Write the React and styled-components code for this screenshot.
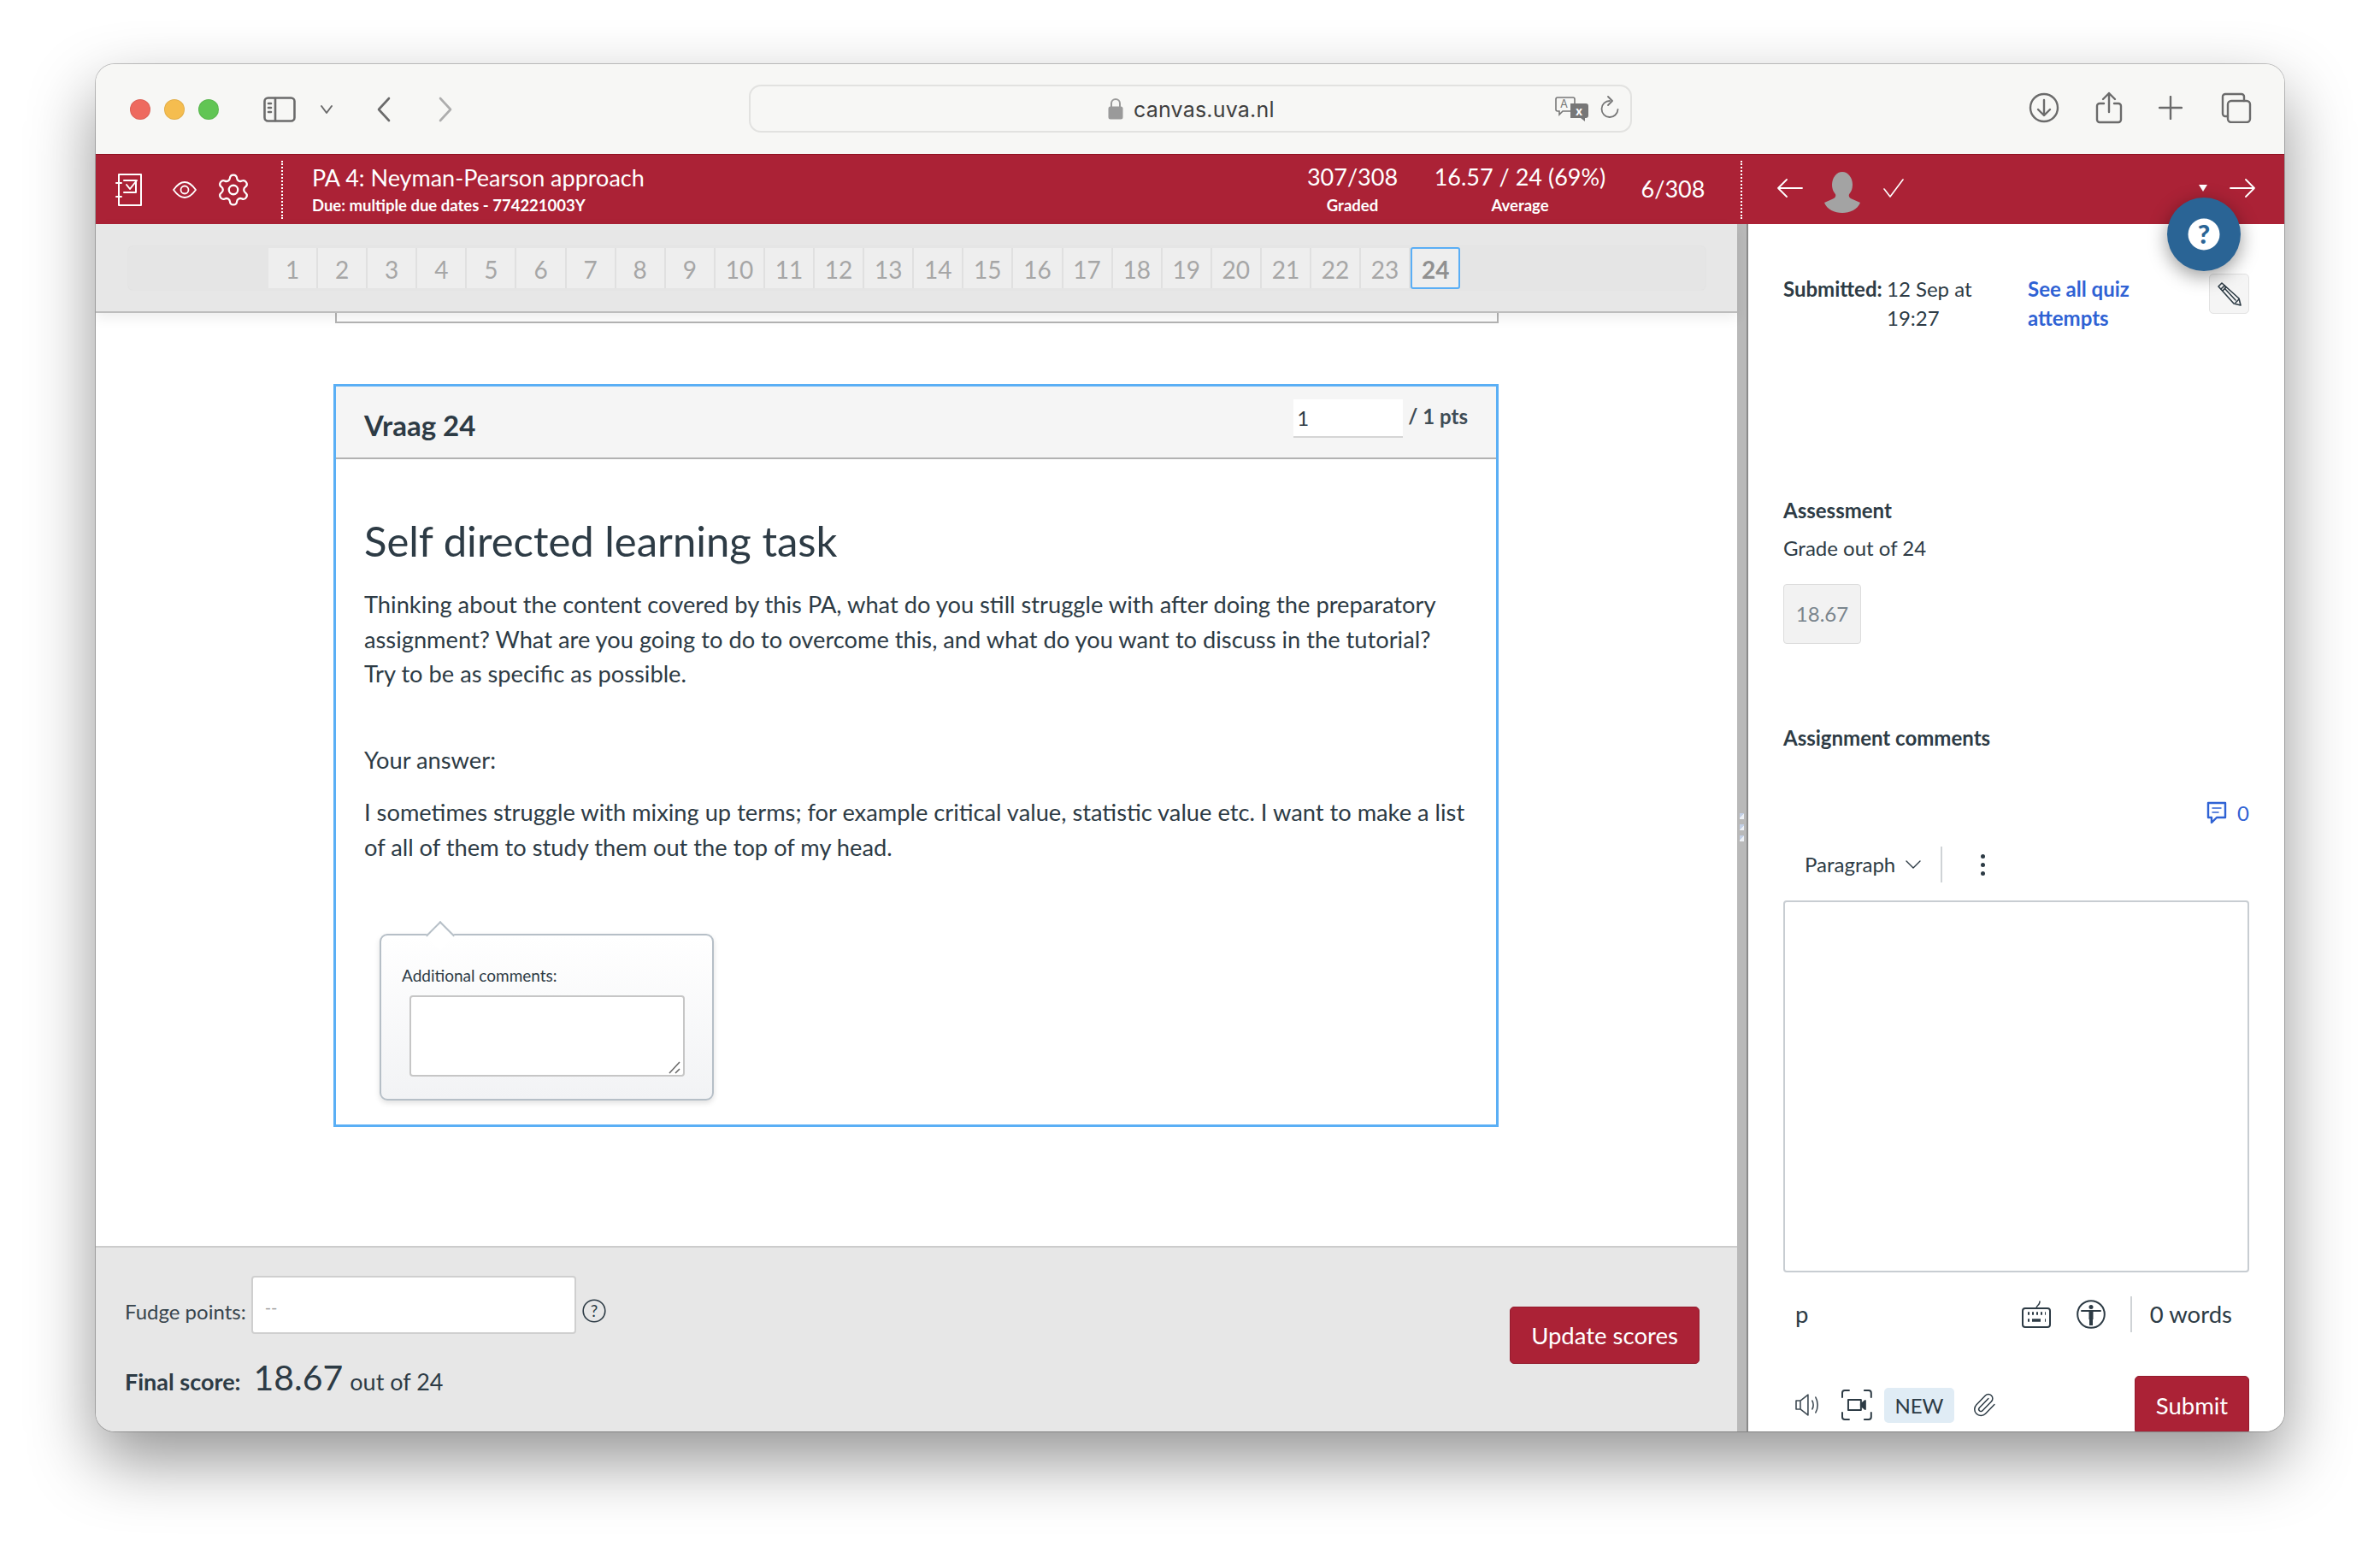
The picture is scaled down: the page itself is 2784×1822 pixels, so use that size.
import { createGlobalStyle, styled } from 'styled-components';
import { Settings, Paperclip } from 'lucide-react';

const GlobalStyle = createGlobalStyle`
    html, body {
        margin: 0;
        padding: 0;
        background: #fff;
    }
    * {
        box-sizing: border-box;
    }
    body {
        font-family: Lato, "Open Sans", sans-serif;
        color: #2d3b45;
    }
`;

const Page = styled.div`
    width: 2784px;
    height: 1822px;
    padding: 75px 112px 0;
    overflow: hidden;
`;

const Window = styled.div`
    width: 2560px;
    height: 1599px;
    border-radius: 22px;
    overflow: hidden;
    display: flex;
    flex-direction: column;
    box-shadow: 0 0 0 1px rgba(0, 0, 0, 0.22), 0 34px 78px rgba(0, 0, 0, 0.42);
`;

/* safari toolbar */
const Toolbar = styled.div`
    height: 105px;
    flex: none;
    background: #f7f7f5;
    display: grid;
    grid-template-columns: 764px 1033px 1fr;
    align-items: center;
`;

const ToolLeft = styled.div`
    display: flex;
    align-items: center;
    padding-left: 40px;
    & svg {
        flex: none;
    }
`;

const Light = styled.span`
    width: 24px;
    height: 24px;
    border-radius: 50%;
    margin-right: 16px;
    background: ${(p) => p.$color};
    box-shadow: inset 0 0 0 1px rgba(0, 0, 0, 0.08);
`;

const AddressBar = styled.div`
    height: 56px;
    margin-top: -2px;
    border: 2px solid #e2e2e0;
    border-radius: 14px;
    background: #f7f7f5;
    display: flex;
    align-items: center;
    padding: 0 12px 0 418px;
`;

const Url = styled.span`
    font-family: Inter, sans-serif;
    font-size: 25px;
    color: #3f3f3f;
    margin-left: 12px;
    margin-right: auto;
    margin-top: 2px;
    letter-spacing: 0.2px;
`;

const ToolRight = styled.div`
    display: flex;
    align-items: center;
    justify-content: flex-end;
    gap: 42px;
    padding-right: 38px;
    margin-top: -4px;
`;

/* speedgrader red bar */
const GraderBar = styled.header`
    height: 82px;
    flex: none;
    background: #ab2236;
    border-top: 1px solid #8f1020;
    display: flex;
    align-items: center;
    color: #fff;
    position: relative;
`;

const BarIcons = styled.div`
    width: 217px;
    flex: none;
    display: flex;
    align-items: center;
    padding-left: 23px;
`;

const DottedLine = styled.span`
    width: 0;
    height: 68px;
    flex: none;
    border-left: 2px dotted #fff;
`;

const Assignment = styled.div`
    flex: 1;
    padding-left: 34px;
`;

const AssignmentTitle = styled.div`
    font-size: 27px;
    line-height: 36px;
    margin-bottom: 1px;
`;

const SmallLabel = styled.div`
    font-size: 18.5px;
    line-height: 26px;
    font-weight: 700;
`;

const Stat = styled.div`
    width: ${(p) => p.$w}px;
    flex: none;
    text-align: center;
    font-size: 27px;
    line-height: 36px;
    padding-bottom: 2px;
    margin-right: ${(p) => p.$mr || 0}px;
    & ${SmallLabel} {
        margin-top: 2px;
    }
`;

const StudentNav = styled.div`
    width: 634px;
    flex: none;
    height: 100%;
    display: flex;
    align-items: center;
    padding: 0 34px 3px 41px;
`;

const Avatar = styled.div`
    margin: 9px 0 0 24px;
    width: 44px;
    height: 48px;
    display: flex;
`;

const Caret = styled.span`
    width: 0;
    height: 0;
    margin-left: auto;
    margin-right: 26px;
    border-left: 5px solid transparent;
    border-right: 5px solid transparent;
    border-top: 8px solid #fff;
`;

const HelpBubble = styled.div`
    position: absolute;
    left: 2423px;
    top: 50px;
    width: 86px;
    height: 86px;
    border-radius: 50%;
    background: #2a6495;
    box-shadow: 0 6px 22px rgba(0, 0, 0, 0.4);
    display: flex;
    align-items: center;
    justify-content: center;
    z-index: 5;
`;

const Body = styled.div`
    flex: 1;
    min-height: 0;
    display: flex;
`;

const LeftPane = styled.div`
    width: 1920px;
    flex: none;
    display: flex;
    flex-direction: column;
`;

const Gutter = styled.div`
    width: 13px;
    flex: none;
    background: #b9b9b9;
    border-right: 2px solid #8a8a8a;
    display: flex;
    flex-direction: column;
    align-items: center;
    gap: 6px;
    padding-top: 689px;
    padding-right: 1px;
`;

const GripDot = styled.span`
    width: 5px;
    height: 7px;
    background: linear-gradient(135deg, #c3d0e6 50%, #eef1f6 50%);
`;

const RightPane = styled.aside`
    flex: 1;
    min-width: 0;
    background: #fff;
    overflow: hidden;
    padding: 59px 41px 0 41px;
    font-size: 24px;
    line-height: 34px;
`;

const TabsBar = styled.div`
    height: 104px;
    flex: none;
    background: #e7e7e7;
    border-bottom: 2px solid #bdbdbd;
    padding: 26px 37px 0 38px;
    box-shadow: 0 6px 14px rgba(0, 0, 0, 0.07);
    position: relative;
    z-index: 1;
`;

const TabsStrip = styled.div`
    height: 51px;
    background: #e5e5e5;
    border-radius: 5px;
    box-shadow: 0 0 2px rgba(0, 0, 0, 0.06);
    padding: 2px 0 0 164px;
    display: flex;
`;

const QTab = styled.div`
    width: 58.1px;
    height: 47px;
    flex: none;
    display: flex;
    align-items: center;
    justify-content: center;
    font-size: 28px;
    padding-top: 3px;
    background: #eeeeee;
    color: ${(p) => (p.$active ? '#909090' : '#a6a6a6')};
    font-weight: ${(p) => (p.$active ? 700 : 400)};
    border-right: 2px solid #e0e0e0;
    ${(p) => p.$active && `
        border: 2px solid #5aaef5;
        border-radius: 3px;
        margin-top: -1px;
        height: 49px;
    `}
`;

const Content = styled.main`
    flex: 1;
    min-height: 0;
    background: #fff;
    padding: 0 279px 0 278px;
`;

const PrevStub = styled.div`
    height: 12px;
    margin-left: 2px;
    border: 2px solid #b4b4b4;
    border-top: 0;
`;

const QuestionBox = styled.section`
    margin-top: 71px;
    height: 869px;
    border: 3px solid #5aaff5;
`;

const QuestionHead = styled.div`
    height: 85px;
    background: #f5f5f5;
    border-bottom: 2px solid #b2b2b2;
    display: flex;
    padding: 0 33px;
`;

const QuestionName = styled.h2`
    margin: 23px auto 0 0;
    font-size: 33px;
    line-height: 44px;
    font-weight: 700;
`;

const PointsInput = styled.div`
    width: 128px;
    height: 45px;
    margin-top: 15px;
    background: #fff;
    border-bottom: 2px solid #d5d5d5;
    font-size: 24px;
    line-height: 44px;
    padding-left: 4px;
    margin-right: 6px;
`;

const PointsLabel = styled.div`
    margin-top: 18px;
    font-size: 24px;
    line-height: 34px;
    font-weight: 700;
    color: #3f4c55;
`;

const QuestionBody = styled.div`
    padding: 65px 33px 0;
`;

const QuestionTitle = styled.h1`
    margin: 0 0 25px;
    font-size: 49px;
    line-height: 60px;
    font-weight: 400;
`;

const Para = styled.p`
    margin: 0 0 ${(p) => p.$mb || 0}px;
    font-size: 27.28px;
    line-height: 40.7px;
`;

const Popup = styled.div`
    position: relative;
    width: 391px;
    height: 195px;
    margin: 81px 0 0 18px;
    border: 2px solid #b6bfc7;
    border-radius: 9px;
    background: linear-gradient(#ffffff, #f2f3f5);
    box-shadow: 0 3px 6px rgba(0, 0, 0, 0.12);
    padding: 34px 0 0 24px;
    &::before {
        content: '';
        position: absolute;
        left: 57px;
        top: -12px;
        width: 22px;
        height: 22px;
        background: #fff;
        border-top: 2px solid #b6bfc7;
        border-left: 2px solid #b6bfc7;
        transform: rotate(45deg);
    }
`;

const PopupLabel = styled.div`
    font-size: 19px;
    line-height: 26px;
`;

const PopupArea = styled.div`
    position: relative;
    width: 322px;
    height: 95px;
    margin: 10px 0 0 9px;
    background: #fff;
    border: 2px solid #c6c6c6;
    border-radius: 4px;
    & svg {
        position: absolute;
        right: 2px;
        bottom: 1px;
    }
`;

const Footer = styled.footer`
    height: 217px;
    flex: none;
    background: #e7e7e7;
    border-top: 2px solid #cccccc;
    display: flex;
    justify-content: space-between;
    padding: 33px 44px 0 34px;
`;

const FudgeRow = styled.div`
    display: flex;
    height: 68px;
    align-items: center;
`;

const FudgeLabel = styled.span`
    font-size: 24px;
    margin-top: 15px;
    margin-right: 6px;
    color: #37444d;
`;

const FudgeInput = styled.div`
    width: 380px;
    height: 68px;
    background: #fff;
    border: 2px solid #cfcfcf;
    border-radius: 4px;
    color: #a0a0a0;
    font-size: 20px;
    line-height: 34px;
    padding: 17px 0 0 14px;
    margin-right: 7px;
`;

const FudgeHelp = styled.span`
    margin-top: 13px;
    display: flex;
`;

const FinalRow = styled.div`
    display: flex;
    align-items: baseline;
    margin-top: 24px;
    font-size: 27px;
`;

const FinalLabel = styled.strong`
    font-size: 27px;
    margin-right: 15px;
`;

const FinalValue = styled.span`
    font-size: 41px;
    line-height: 54px;
    margin-right: 8px;
`;

const RedButton = styled.button`
    font-family: inherit;
    background: #ab2236;
    color: #fff;
    border: 1px solid #931b2d;
    border-radius: 5px;
    font-size: 27.5px;
    width: ${(p) => p.$w}px;
    height: ${(p) => p.$h}px;
    margin-top: ${(p) => p.$mt || 0}px;
    margin-left: ${(p) => p.$ml || 0}px;
    flex: none;
    padding: 0;
`;

const SubmissionRow = styled.div`
    display: flex;
    align-items: flex-start;
    min-height: 68px;
`;

const SubmittedLabel = styled.strong`
    width: 121px;
    flex: none;
    font-weight: 700;
`;

const SubmittedDate = styled.span`
    width: 165px;
    flex: none;
`;

const QuizLink = styled.a`
    width: 212px;
    flex: none;
    color: #2f62d4;
    font-weight: 700;
`;

const PencilButton = styled.div`
    width: 47px;
    height: 47px;
    flex: none;
    margin-top: -1px;
    background: #f5f5f5;
    border: 1px solid #e2e2e2;
    border-radius: 5px;
    display: flex;
    align-items: center;
    justify-content: center;
`;

const SectionTitle = styled.div`
    font-weight: 700;
    margin-top: ${(p) => p.$mt}px;
`;

const PlainLine = styled.div`
    margin-top: ${(p) => p.$mt}px;
`;

const GradeField = styled.div`
    width: 91px;
    height: 70px;
    margin-top: 25px;
    border: 1px solid #dcdcdc;
    border-radius: 4px;
    background: #f2f2f2;
    color: #7a858d;
    line-height: 68px;
    text-align: center;
`;

const CommentCount = styled.div`
    margin-top: 54px;
    display: flex;
    justify-content: flex-end;
    align-items: center;
    gap: 12px;
    color: #2f62d4;
`;

const EditorTools = styled.div`
    height: 42px;
    margin-top: 22px;
    display: flex;
    align-items: center;
    padding-left: 25px;
`;

const ParagraphLabel = styled.span`
    margin-right: 12px;
`;

const ToolDivider = styled.span`
    width: 2px;
    height: 42px;
    background: #cfd3d6;
    margin: 0 ${(p) => p.$mr}px 0 ${(p) => p.$ml}px;
    flex: none;
`;

const DotsIcon = styled.div`
    display: flex;
    flex-direction: column;
    gap: 5px;
    & span {
        width: 5px;
        height: 5px;
        border-radius: 50%;
        background: #2d3b45;
    }
`;

const EditorBox = styled.div`
    height: 435px;
    margin-top: 21px;
    border: 2px solid #c8cdd2;
    border-radius: 4px;
`;

const StatusRow = styled.div`
    height: 44px;
    margin-top: 27px;
    display: flex;
    align-items: center;
    padding-left: 14px;
    font-size: 27.5px;
`;

const StatusIcons = styled.div`
    margin-left: auto;
    display: flex;
    align-items: center;
    gap: 30px;
`;

const ActionRow = styled.div`
    height: 68px;
    margin-top: 50px;
    display: flex;
    align-items: center;
    padding-left: 14px;
`;

const NewBadge = styled.span`
    width: 83px;
    height: 41px;
    margin: 0 20px 0 14px;
    background: #e0ecf5;
    border-radius: 5px;
    font-size: 24px;
    line-height: 41px;
    text-align: center;
`;

const ChromeIcon = ({ w = 32, h = 32, sw = 2.6, color = '#6b6b6b', ml = 0, children }) => (
    <svg
        width={w}
        height={h}
        viewBox={`0 0 ${w} ${h}`}
        fill="none"
        stroke={color}
        strokeWidth={sw}
        strokeLinecap="round"
        strokeLinejoin="round"
        style={ml ? { marginLeft: ml } : undefined}
    >
        {children}
    </svg>
);

const HeaderArrow = ({ flip }) => (
    <ChromeIcon w={30} h={24} sw={1.8} color="#fff">
        {flip ? <path d="M1 12h28M19 2l10 10-10 10" /> : <path d="M29 12H1M11 2 1 12l10 10" />}
    </ChromeIcon>
);

const tabs = Array.from({ length: 24 }, (_, i) => i + 1);

export default function App() {
    return (
        <Page>
            <GlobalStyle />
            <Window>
                <Toolbar>
                    <ToolLeft>
                        <Light $color="#ee6a5f" />
                        <Light $color="#f5bd4f" />
                        <Light $color="#61c554" />
                        <ChromeIcon w={38} h={30} ml={36}>
                            <rect x="1.5" y="1.5" width="35" height="27" rx="4" />
                            <path d="M14 2v26M6 8h3M6 13h3M6 18h3" />
                        </ChromeIcon>
                        <ChromeIcon w={16} h={12} sw={2} ml={28}>
                            <path d="M2 2l6 8 6-8" />
                        </ChromeIcon>
                        <ChromeIcon w={18} h={30} ml={50}>
                            <path d="M15 2 3 15l12 13" />
                        </ChromeIcon>
                        <ChromeIcon w={18} h={30} ml={54} color="#adadad">
                            <path d="M3 2l12 13L3 28" />
                        </ChromeIcon>
                    </ToolLeft>
                    <AddressBar>
                        <svg width="18" height="26" viewBox="0 0 18 26">
                            <path d="M4 11V7a5 5 0 0 1 10 0v4" fill="none" stroke="#9a9a9a" strokeWidth="2" />
                            <rect x="0.5" y="10.5" width="17" height="15" rx="2.5" fill="#9a9a9a" />
                        </svg>
                        <Url>canvas.uva.nl</Url>
                        <svg width="40" height="30" viewBox="0 0 40 30">
                            <path d="M3 2h18a2 2 0 0 1 2 2v12a2 2 0 0 1-2 2H9l-4 4v-4H3a2 2 0 0 1-2-2V4a2 2 0 0 1 2-2z" fill="#f7f7f5" stroke="#777" strokeWidth="1.6" />
                            <path d="M18 9h18a3 3 0 0 1 3 3v11a3 3 0 0 1-3 3h-1v4l-5-4H18z" fill="#777" />
                            <text x="6" y="14" fontSize="13" fontFamily="Inter, sans-serif" fill="#777">A</text>
                            <text x="24" y="23" fontSize="14" fontWeight="700" fontFamily="Inter, sans-serif" fill="#fff">x</text>
                        </svg>
                        <ChromeIcon w={24} h={30} sw={1.8} ml={12} color="#777">
                            <path d="M12 6a9.5 9.5 0 1 0 9.5 10" />
                            <path d="M10 1l5 5-5 5" />
                        </ChromeIcon>
                    </AddressBar>
                    <ToolRight>
                        <ChromeIcon w={36} h={36} sw={2.4}>
                            <circle cx="18" cy="18" r="16" />
                            <path d="M18 9v17M11 20l7 7 7-7" />
                        </ChromeIcon>
                        <ChromeIcon w={32} h={38} sw={2.4}>
                            <path d="M10 14H5a3 3 0 0 0-3 3v16a3 3 0 0 0 3 3h22a3 3 0 0 0 3-3V17a3 3 0 0 0-3-3h-5" />
                            <path d="M16 24V2M9 9l7-7 7 7" />
                        </ChromeIcon>
                        <ChromeIcon w={28} h={28} sw={2.4}>
                            <path d="M14 1v26M1 14h26" />
                        </ChromeIcon>
                        <ChromeIcon w={36} h={36} sw={2.4} ml={3}>
                            <rect x="8" y="10" width="26" height="25" rx="4" />
                            <path d="M8 28H5a3 3 0 0 1-3-3V5a3 3 0 0 1 3-3h19a3 3 0 0 1 3 3v5" />
                        </ChromeIcon>
                    </ToolRight>
                </Toolbar>

                <GraderBar>
                    <BarIcons>
                        <ChromeIcon w={34} h={40} sw={2} color="#fff">
                            <path d="M4 2h26v36H4z" />
                            <path d="M1 12h6M1 28h6" />
                            <path d="M10 9h14v14H10" />
                            <path d="M13 14l4 5 8-10" />
                        </ChromeIcon>
                        <ChromeIcon w={28} h={22} sw={1.8} color="#fff" ml={33}>
                            <path d="M1 11C6 4 10 2 14 2s8 2 13 9c-5 7-9 9-13 9S6 18 1 11z" />
                            <circle cx="14" cy="11" r="4.5" />
                        </ChromeIcon>
                        <Settings size={42} color="#fff" strokeWidth={1.3} style={{ marginLeft: 22 }} />
                    </BarIcons>
                    <DottedLine />
                    <Assignment>
                        <AssignmentTitle>PA 4: Neyman-Pearson approach</AssignmentTitle>
                        <SmallLabel>Due: multiple due dates - 774221003Y</SmallLabel>
                    </Assignment>
                    <Stat $w={140} $mr={6}>
                        307/308
                        <SmallLabel>Graded</SmallLabel>
                    </Stat>
                    <Stat $w={240} $mr={9}>
                        16.57 / 24 (69%)
                        <SmallLabel>Average</SmallLabel>
                    </Stat>
                    <Stat $w={100} $mr={29}>6/308</Stat>
                    <DottedLine />
                    <StudentNav>
                        <HeaderArrow />
                        <Avatar>
                            <svg width="44" height="48" viewBox="0 0 44 48">
                                <ellipse cx="22" cy="15" rx="12" ry="15" fill="#a3a3a3" />
                                <path d="M14 26c1 3-1 5-4 6l-9 4c3 8 12 12 21 12s18-4 21-12l-9-4c-3-1-5-3-4-6z" fill="#a3a3a3" />
                            </svg>
                        </Avatar>
                        <ChromeIcon w={24} h={24} sw={1.6} color="#fff" ml={26}>
                            <path d="M1 13l7 9L23 2" />
                        </ChromeIcon>
                        <Caret />
                        <HeaderArrow flip />
                    </StudentNav>
                    <HelpBubble>
                        <svg width="38" height="38" viewBox="0 0 38 38">
                            <circle cx="19" cy="19" r="18.5" fill="#fff" />
                            <text x="19" y="30" textAnchor="middle" fontSize="31" fontWeight="900" fontFamily="Lato, sans-serif" fill="#2a6495">?</text>
                        </svg>
                    </HelpBubble>
                </GraderBar>

                <Body>
                    <LeftPane>
                        <TabsBar>
                            <TabsStrip>
                                {tabs.map((n) => (
                                    <QTab key={n} $active={n === 24}>{n}</QTab>
                                ))}
                            </TabsStrip>
                        </TabsBar>
                        <Content>
                            <PrevStub />
                            <QuestionBox>
                                <QuestionHead>
                                    <QuestionName>Vraag 24</QuestionName>
                                    <PointsInput>1</PointsInput>
                                    <PointsLabel>/ 1 pts</PointsLabel>
                                </QuestionHead>
                                <QuestionBody>
                                    <QuestionTitle>Self directed learning task</QuestionTitle>
                                    <Para $mb={60}>
                                        Thinking about the content covered by this PA, what do you still struggle with after doing the preparatory
                                        <br />
                                        assignment? What are you going to do to overcome this, and what do you want to discuss in the tutorial?
                                        <br />
                                        Try to be as specific as possible.
                                    </Para>
                                    <Para $mb={20}>Your answer:</Para>
                                    <Para>
                                        I sometimes struggle with mixing up terms; for example critical value, statistic value etc. I want to make a list
                                        <br />
                                        of all of them to study them out the top of my head.
                                    </Para>
                                    <Popup>
                                        <PopupLabel>Additional comments:</PopupLabel>
                                        <PopupArea>
                                            <svg width="16" height="16" viewBox="0 0 16 16" stroke="#6b6b6b" strokeWidth="1.6">
                                                <path d="M2 15 14 2M9 15l5-5" />
                                            </svg>
                                        </PopupArea>
                                    </Popup>
                                </QuestionBody>
                            </QuestionBox>
                        </Content>
                        <Footer>
                            <div>
                                <FudgeRow>
                                    <FudgeLabel>Fudge points:</FudgeLabel>
                                    <FudgeInput>--</FudgeInput>
                                    <FudgeHelp>
                                        <svg width="28" height="28" viewBox="0 0 28 28">
                                            <circle cx="14" cy="14" r="12.8" fill="none" stroke="#2d3b45" strokeWidth="1.6" />
                                            <text x="14" y="20.5" textAnchor="middle" fontSize="19" fontFamily="Lato, sans-serif" fill="#2d3b45">?</text>
                                        </svg>
                                    </FudgeHelp>
                                </FudgeRow>
                                <FinalRow>
                                    <FinalLabel>Final score:</FinalLabel>
                                    <FinalValue>18.67</FinalValue>
                                    out of 24
                                </FinalRow>
                            </div>
                            <RedButton $w={222} $h={67} $mt={36}>Update scores</RedButton>
                        </Footer>
                    </LeftPane>
                    <Gutter>
                        <GripDot />
                        <GripDot />
                        <GripDot />
                    </Gutter>
                    <RightPane>
                        <SubmissionRow>
                            <SubmittedLabel>Submitted:</SubmittedLabel>
                            <SubmittedDate>
                                12 Sep at
                                <br />
                                19:27
                            </SubmittedDate>
                            <QuizLink>
                                See all quiz
                                <br />
                                attempts
                            </QuizLink>
                            <PencilButton>
                                <ChromeIcon w={30} h={30} sw={1.6} color="#2d3b45">
                                    <path d="M6 2 2 6l18 20 8 2-2-8z" />
                                    <path d="M5 9l4-4 2 2-4 4M22 25l4-4M9 8l13 14" />
                                </ChromeIcon>
                            </PencilButton>
                        </SubmissionRow>
                        <SectionTitle $mt={191}>Assessment</SectionTitle>
                        <PlainLine $mt={10}>Grade out of 24</PlainLine>
                        <GradeField>18.67</GradeField>
                        <SectionTitle $mt={93}>Assignment comments</SectionTitle>
                        <CommentCount>
                            <ChromeIcon w={24} h={28} sw={2.4} color="#2f62d4">
                                <path d="M2 2h20v17h-10l-6 6v-6H2z" />
                                <path d="M7 8h10M7 13h7" strokeWidth="1.5" />
                            </ChromeIcon>
                            0
                        </CommentCount>
                        <EditorTools>
                            <ParagraphLabel>Paragraph</ParagraphLabel>
                            <ChromeIcon w={18} h={10} sw={1.4} color="#2d3b45">
                                <path d="M1 1l8 8 8-8" />
                            </ChromeIcon>
                            <ToolDivider $ml={23} $mr={45} />
                            <DotsIcon>
                                <span />
                                <span />
                                <span />
                            </DotsIcon>
                        </EditorTools>
                        <EditorBox />
                        <StatusRow>
                            p
                            <StatusIcons>
                                <ChromeIcon w={34} h={32} sw={2} color="#2d3b45">
                                    <rect x="1" y="9" width="32" height="22" rx="3" />
                                    <path d="M17 9c0-4 4-3 4-8" strokeWidth="1.5" />
                                    <path d="M7 15h2M12 15h2M17 15h2M22 15h2M27 15h1M7 23h2M12 23h10M27 23h1" strokeWidth="3.4" strokeLinecap="butt" />
                                </ChromeIcon>
                                <ChromeIcon w={34} h={34} sw={2} color="#2d3b45">
                                    <circle cx="17" cy="17" r="15.8" />
                                    <circle cx="17" cy="8.5" r="2.5" fill="#2d3b45" stroke="none" />
                                    <path d="M6 13h22" />
                                    <path d="M14.5 13h5v10h-5zM15 22h4v8h-4z" fill="#2d3b45" stroke="none" />
                                </ChromeIcon>
                            </StatusIcons>
                            <ToolDivider $ml={29} $mr={21} />
                            <span style={{ marginRight: 20 }}>0 words</span>
                        </StatusRow>
                        <ActionRow>
                            <ChromeIcon w={28} h={28} sw={1.6} color="#3e4a53">
                                <path d="M1 9h5l9-7v24l-9-7H1zM6 9v10" />
                                <path d="M20 9c1.5 3 1.5 7 0 10M24 5c3 5 3 13 0 18" />
                            </ChromeIcon>
                            <ChromeIcon w={36} h={36} sw={2} color="#2d3b45" ml={26}>
                                <path d="M1 9V4a3 3 0 0 1 3-3h5M27 1h5a3 3 0 0 1 3 3v5M35 27v5a3 3 0 0 1-3 3h-5M9 35H4a3 3 0 0 1-3-3v-5" />
                                <rect x="8" y="12" width="15" height="12" />
                                <path d="M23 17l5-4v10l-5-4z" fill="#2d3b45" />
                            </ChromeIcon>
                            <NewBadge>NEW</NewBadge>
                            <Paperclip size={30} strokeWidth={1.2} color="#2d3b45" />
                            <RedButton $w={134} $h={68} $ml={161}>Submit</RedButton>
                        </ActionRow>
                    </RightPane>
                </Body>
            </Window>
        </Page>
    );
}
